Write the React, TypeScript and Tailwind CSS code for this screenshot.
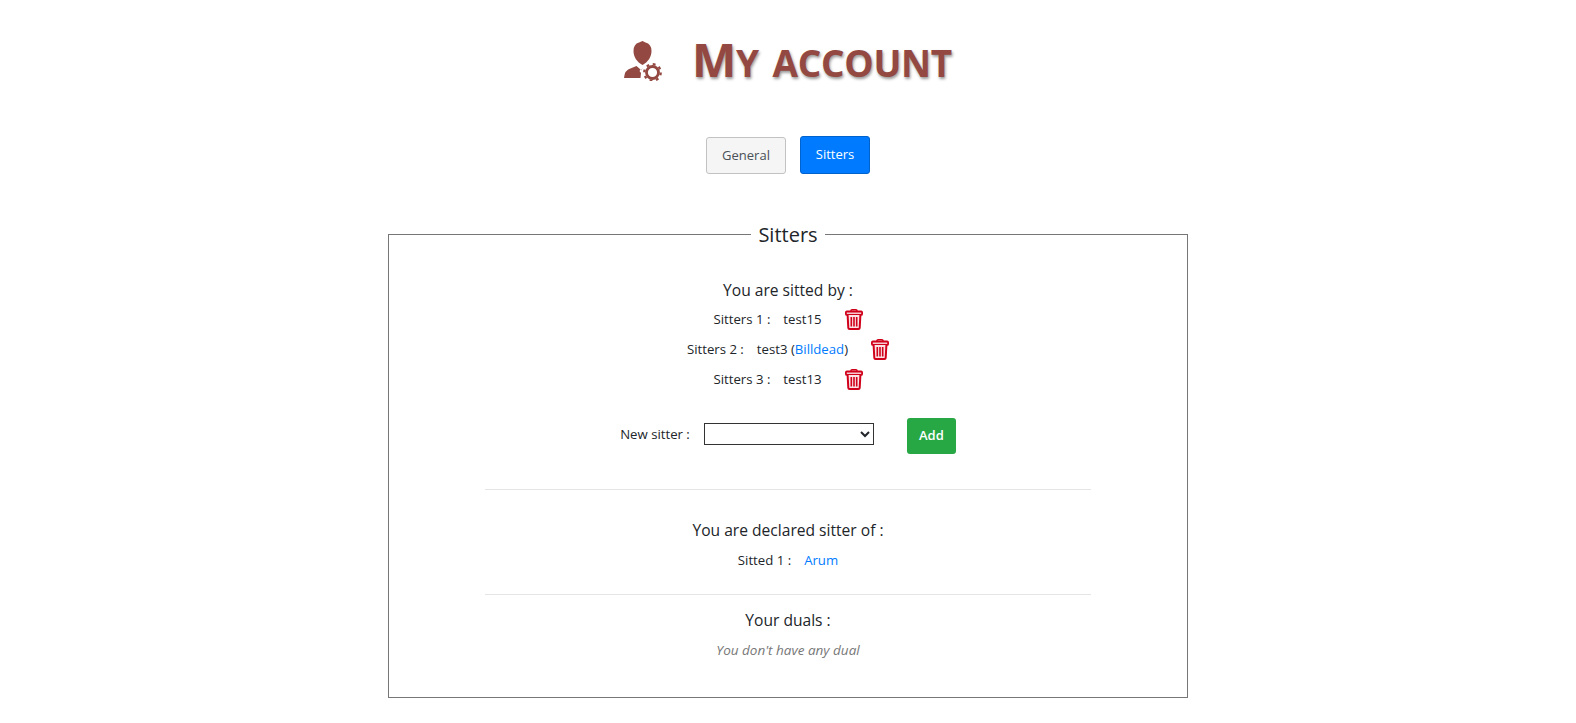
function Trash() {
  return (
    <svg width="18" height="21" viewBox="0 0 18 21" className="shrink-0">
      <path d="M6 2.500 V1.700 Q6 .8 7 .8 H11 Q12 .8 12 1.700 V2.500" fill="none" stroke="#d0021b" strokeWidth="1.500" />
      <rect x=".9" y="2.500" width="16.200" height="3.400" rx="1" fill="#f7c9cf" stroke="#d0021b" strokeWidth="1.800" />
      <path d="M2.600 5.900 L3.300 18.800 Q3.400 20 4.600 20 H13.400 Q14.600 20 14.700 18.800 L15.400 5.900" fill="#fbe3e6" stroke="#d0021b" strokeWidth="2" />
      <path d="M6.300 8 V17.500 M9 8 V17.500 M11.700 8 V17.500" stroke="#d0021b" strokeWidth="1.600" />
    </svg>
  );
}

function AccountIcon() {
  return (
    <svg width="40" height="40" viewBox="0 0 40 40" className="shrink-0">
      <path d="M9.500 10 Q9.500 3 15 1.500 L18.500 0 L21.500 1.500 Q27.500 3 27.500 10 C27.500 16 24 21 18.500 24 C13 21 9.500 16 9.500 10 Z" fill="#934841" />
      <path d="M0 37 Q.5 29 7 27.300 L12.500 25 L16.500 28.500 L15.500 30 L17 32 L16.500 37 Z" fill="#934841" />
      <path d="M18.500 32 L18 30 L17.500 28.500 L21 25 L26 27 L19.500 33 Z" fill="#934841" />
      <circle cx="28.500" cy="31.500" r="11" fill="#fff" />
      <circle cx="28.500" cy="31.500" r="6" fill="none" stroke="#934841" strokeWidth="2.800" />
      <circle cx="28.500" cy="31.500" r="8.300" fill="none" stroke="#934841" strokeWidth="2.200" strokeDasharray="2.800 3.720" />
    </svg>
  );
}

function Row({ label, children }: { label: string; children: React.ReactNode }) {
  return (
    <div className="flex h-[30px] items-center justify-center text-[13.2px] text-[#212529]">
      <span>{label}</span>
      <span className="ml-[13px]">{children}</span>
      <span className="ml-[23px] pb-[2px]"><Trash /></span>
    </div>
  );
}

export default function App() {
  return (
    <div className="h-[723px] overflow-hidden bg-white text-[#212529] [font-family:'Open_Sans',sans-serif]">
      <header className="flex h-[116px] items-start justify-center pt-[33px]">
        <span className="mt-[8px]"><AccountIcon /></span>
        <h1 className="ml-[28px] text-[53.5px] leading-[48px] font-bold tracking-[-0.3px] text-[#934841] [font-variant:small-caps] [text-shadow:1px_2px_3px_#999]">
          <span className="text-[47px]">M</span>y account
        </h1>
      </header>

      <nav className="mt-[20px] flex items-end justify-center gap-[14px]">
        <button className="h-[37px] w-[80px] rounded-[3px] border border-[#c2c2c2] bg-[#f5f5f5] text-[13px] text-[#495057]">General</button>
        <button className="h-[38px] w-[70px] rounded-[3px] border border-[#0062cc] bg-[#007bff] text-[13px] text-white">Sitters</button>
      </nav>

      <fieldset className="mx-auto mt-[47px] h-[477px] w-[800px] border border-[#777] text-center">
        <legend className="mx-auto px-[7px] pt-[2px] text-[20px] leading-[24px] text-[#212529]">Sitters</legend>

        <h2 className="mt-[31px] text-[15.6px] leading-[24px]">You are sitted by :</h2>
        <div className="mt-[3px]">
          <Row label="Sitters 1 :">test15</Row>
          <Row label="Sitters 2 :">test3 (<a className="text-[#007bff]">Billdead</a>)</Row>
          <Row label="Sitters 3 :">test13</Row>
        </div>

        <div className="mt-[21px] flex items-center justify-center text-[13.2px]">
          <span>New sitter :</span>
          <select className="mb-[2px] ml-[14px] h-[22px] w-[170px] border border-[#333] bg-white" />
          <button className="mt-[2px] ml-[33px] h-[36px] w-[49px] rounded-[3px] bg-[#28a745] text-[13px] font-semibold text-white">Add</button>
        </div>

        <hr className="mx-auto mt-[35px] w-[606px] border-[#e5e5e5]" />

        <h2 className="mt-[28px] text-[15.6px] leading-[24px]">You are declared sitter of :</h2>
        <div className="mt-[4px] flex h-[30px] items-center justify-center text-[13.2px]">
          <span>Sitted 1 :</span>
          <a className="ml-[13px] text-[#007bff]">Arum</a>
        </div>

        <hr className="mx-auto mt-[18px] w-[606px] border-[#e5e5e5]" />

        <h2 className="mt-[13px] text-[15.6px] leading-[24px]">Your duals :</h2>
        <p className="mt-[6px] text-[13.5px] leading-[24px] text-[#777] italic">You don't have any dual</p>
      </fieldset>
    </div>
  );
}
